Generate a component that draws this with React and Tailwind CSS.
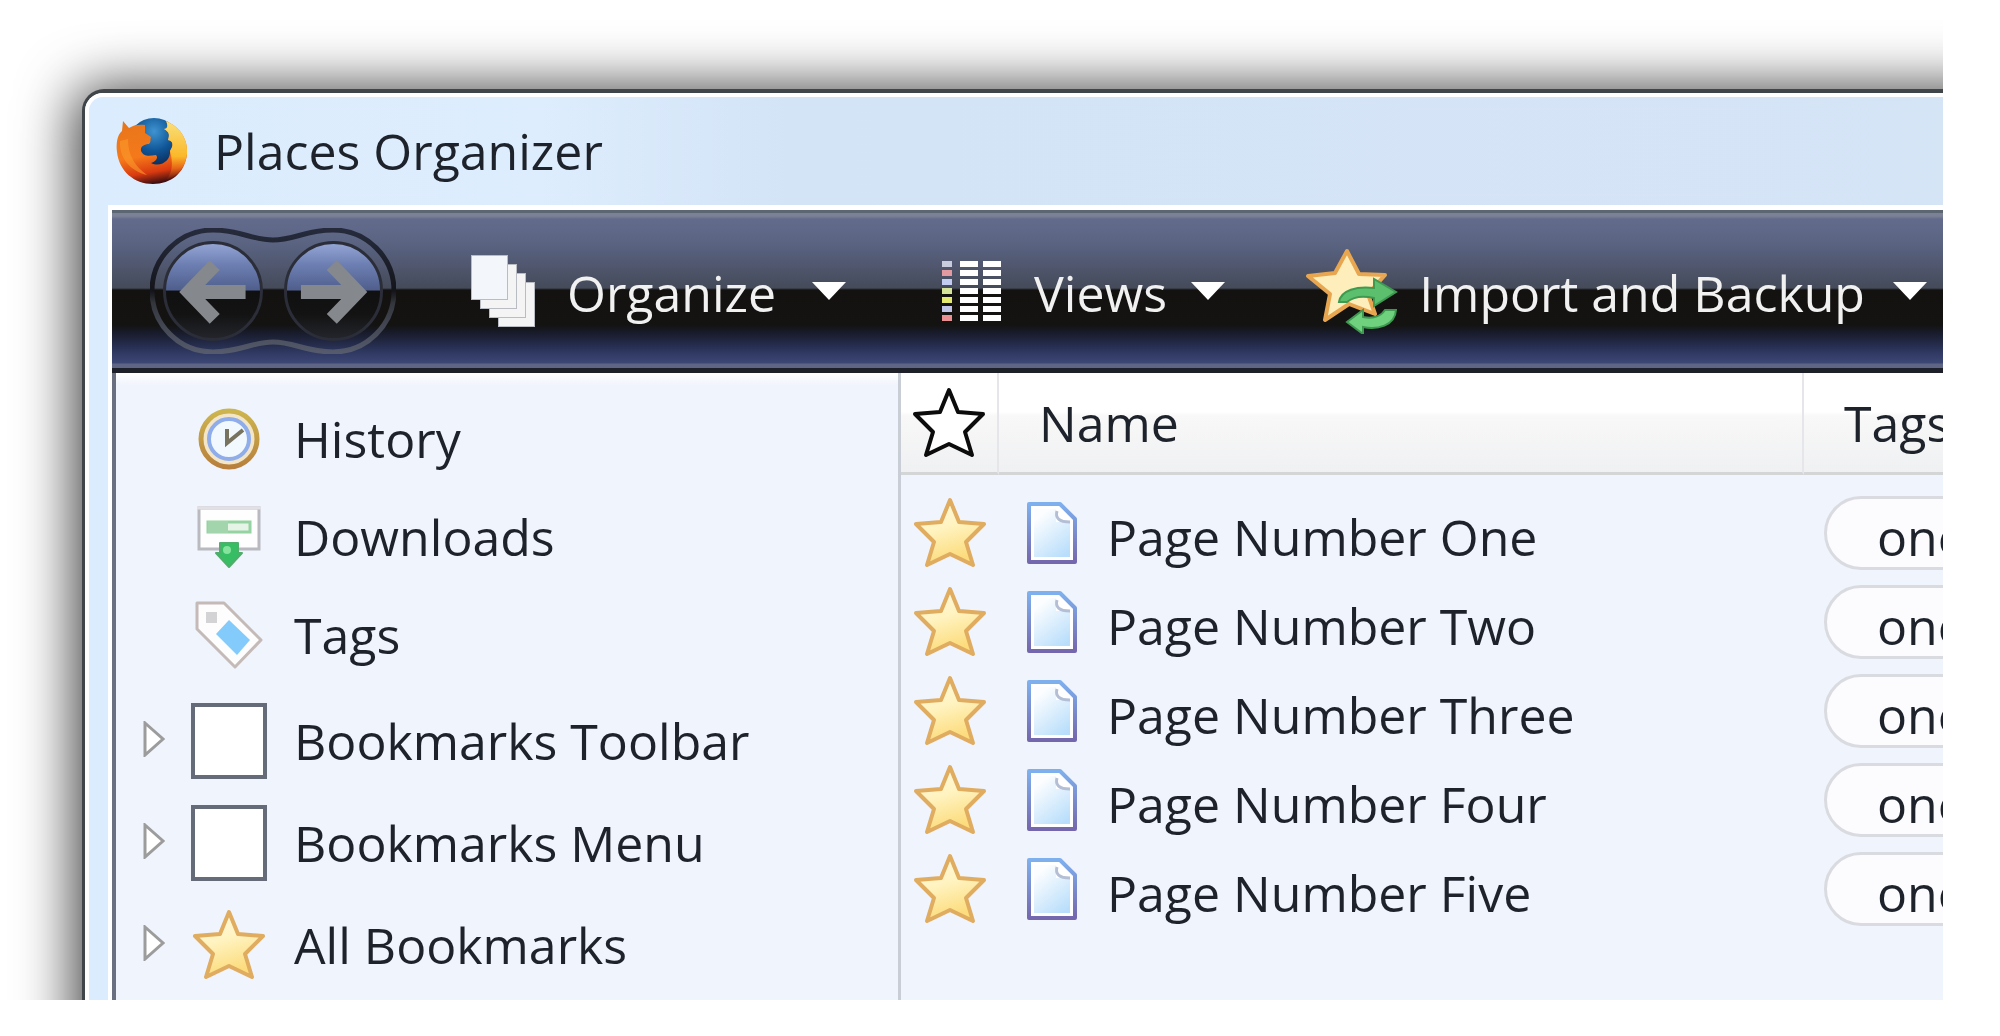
const STAR =
  "M37 3 L46 25 L71 27 L53 45 L60 68 L37 57 L14 68 L21 45 L3 27 L28 25 Z";

function Star({ outline = false }) {
  return (
    <svg viewBox="0 0 74 72" className="block h-[72px] w-[74px]" aria-hidden="true">
      <defs>
        <linearGradient id="star-fill" x1="0" y1="0" x2="0.3" y2="1">
          <stop offset="0" stopColor="#fffbe6" />
          <stop offset="0.5" stopColor="#fff3c0" />
          <stop offset="1" stopColor="#fcdc7c" />
        </linearGradient>
      </defs>
      <path
        d={STAR}
        fill={outline ? "#ffffff" : "url(#star-fill)"}
        stroke={outline ? "#0c0c0c" : "#e0ac60"}
        strokeWidth="4"
        strokeLinejoin="round"
      />
    </svg>
  );
}

function FirefoxLogo() {
  return (
    <svg viewBox="0 0 72 68" className="block h-[68px] w-[72px]" aria-hidden="true">
      <defs>
        <radialGradient id="globe" cx="0.5" cy="0.25" r="0.8">
          <stop offset="0" stopColor="#3f93d0" />
          <stop offset="0.45" stopColor="#0f5596" />
          <stop offset="1" stopColor="#0a1536" />
        </radialGradient>
        <linearGradient id="fox" x1="0.3" y1="0" x2="0.5" y2="1">
          <stop offset="0" stopColor="#e8761c" />
          <stop offset="0.55" stopColor="#f5791a" />
          <stop offset="0.82" stopColor="#d93a10" />
          <stop offset="1" stopColor="#3b0d10" />
        </linearGradient>
        <linearGradient id="tail" x1="0" y1="0" x2="0" y2="1">
          <stop offset="0" stopColor="#f9e07a" />
          <stop offset="0.6" stopColor="#fbb829" />
          <stop offset="1" stopColor="#ee6a16" stopOpacity="0" />
        </linearGradient>
      </defs>
      <circle cx="38" cy="28" r="27" fill="url(#globe)" />
      <path
        d="M7 4 L13 11 C17 8 23 7 29 8 L29 16 L35 20 C34 24 35 25 33 27 C29 27 24 29 25 34 C28 40 33 39 40 38 C43 41 39 45 35 46 C45 51 55 43 54 34 C58 28 57 24 52 23 C54 17 53 15 48 12 C52 12 52 8 50 4 C66 11 72 24 71 37 C69 56 55 67 37 67 C18 67 3 54 1 35 C0 27 1 18 6 14 Z"
        fill="url(#fox)"
      />
      <path
        d="M50 4 C66 11 72 24 71 37 C69 51 62 59 50 63 C57 55 57 46 54 34 C58 28 57 24 52 23 C54 17 53 15 48 12 C52 12 52 8 50 4 Z"
        fill="url(#tail)"
      />
      <path d="M4 24 C3 42 15 54 31 58 C19 49 12 39 12 22 Z" fill="#fb9a2c" opacity="0.6" />
    </svg>
  );
}

function NavButton({ label, flip = false }) {
  return (
    <button
      type="button"
      aria-label={label}
      className="size-[100px] rounded-full border-3 border-[#2b2e38] bg-[linear-gradient(#93a4d4_0%,#6d7fb2_22%,#4f5e8c_49%,#101010_50%,#131313_75%,#23252b_100%)]"
    >
      <svg
        viewBox="0 0 94 94"
        className={flip ? "block size-full -scale-x-100" : "block size-full"}
        aria-hidden="true"
      >
        <path
          d="M49 21 L23 48 L49 75 M27 48 H80"
          fill="none"
          stroke="#85888c"
          strokeWidth="14"
        />
      </svg>
    </button>
  );
}

function NavButtons() {
  return (
    <div className="relative flex h-[126px] w-[246px] shrink-0 items-center gap-[21px] px-[13px]">
      <svg
        viewBox="0 0 246 126"
        className="absolute inset-0 -z-10 size-full"
        fill="none"
        aria-hidden="true"
      >
        <defs>
          <linearGradient id="ring" x1="0" y1="0" x2="0" y2="1">
            <stop offset="0" stopColor="#262b3c" />
            <stop offset="0.5" stopColor="#14151b" />
            <stop offset="0.6" stopColor="#33363c" />
            <stop offset="1" stopColor="#555a6c" />
          </linearGradient>
        </defs>
        <path
          d="M63 2 C90 2 102 12 123 12 C144 12 156 2 183 2 A61 61 0 0 1 183 124 C156 124 144 114 123 114 C102 114 90 124 63 124 A61 61 0 0 1 63 2 Z"
          stroke="url(#ring)"
          strokeWidth="5"
        />
      </svg>
      <NavButton label="Back" />
      <NavButton label="Forward" flip />
    </div>
  );
}

function PagesIcon() {
  return (
    <svg viewBox="0 0 64 72" className="block h-[72px] w-16" aria-hidden="true">
      {[27, 18, 9, 0].map((o) => (
        <rect
          key={o}
          x={o + 0.5}
          y={o + 0.5}
          width="36"
          height="44"
          fill={o === 0 ? "#f3f7fc" : "#f4f4f4"}
          stroke="#b9bcc2"
        />
      ))}
    </svg>
  );
}

function ViewsIcon() {
  const dots = ["#c9ccdd", "#e39aa0", "#c3cdf4", "#d5e39a", "#e3e96e", "#c0c4e6", "#ea8f92"];
  return (
    <svg viewBox="0 0 60 60" className="block size-[60px]" aria-hidden="true">
      {dots.map((c, i) => (
        <g key={c}>
          <rect x="0" y={i * 9} width="10" height="6" fill={c} />
          <rect x="18" y={i * 9} width="18" height="6" fill="#ffffff" />
          <rect x="41" y={i * 9} width="18" height="6" fill="#ffffff" />
        </g>
      ))}
    </svg>
  );
}

function ImportIcon() {
  return (
    <svg viewBox="0 0 94 86" className="block h-[86px] w-[94px]" aria-hidden="true">
      <path
        d="M42 3 L54 26 L80 27 L63 46 L70 66 L44 56 L20 72 L25 46 L3 28 L30 25 Z"
        fill="#fdeebb"
        stroke="#e9a650"
        strokeWidth="4"
        strokeLinejoin="round"
      />
      <path
        d="M34 54 C36 42 52 38 69 40 V31 L91 44 L69 58 V50 C56 47 48 49 42 54 Z"
        fill="#5cbf6d"
        stroke="#3d9a50"
        strokeWidth="2"
      />
      <path
        d="M91 62 C90 78 72 82 58 79 V86 L42 74 L58 62 V69 C68 71 76 68 80 62 Z"
        fill="#6fd07d"
        stroke="#3d9a50"
        strokeWidth="2"
      />
    </svg>
  );
}

function ToolbarMenu({ label, icon, iconGap, caretGap }) {
  return (
    <button type="button" className="flex shrink-0 items-center whitespace-nowrap text-[#f1f1f1]">
      {icon}
      <span className={`${iconGap} pt-1`}>{label}</span>
      <svg viewBox="0 0 34 18" className={`${caretGap} h-[18px] w-[34px]`} aria-hidden="true">
        <path d="M0 0 H34 L17 18 Z" fill="#ffffff" />
      </svg>
    </button>
  );
}

function ClockIcon() {
  return (
    <svg viewBox="0 0 64 64" className="size-16" aria-hidden="true">
      <defs>
        <linearGradient id="brass" x1="0" y1="0" x2="0" y2="1">
          <stop offset="0" stopColor="#cdb54e" />
          <stop offset="1" stopColor="#b8803c" />
        </linearGradient>
      </defs>
      <circle cx="32" cy="32" r="28" fill="#f3e6c8" stroke="url(#brass)" strokeWidth="5" />
      <circle cx="32" cy="32" r="20" fill="#f1f9ff" stroke="#8fadea" strokeWidth="4" />
      <path d="M30 22 V36 L46 23" fill="none" stroke="#77735f" strokeWidth="4" />
    </svg>
  );
}

function DownloadIcon() {
  return (
    <svg viewBox="0 0 64 64" className="size-16" aria-hidden="true">
      <rect x="2" y="3" width="60" height="41" fill="#fdfefd" stroke="#b9b9bf" strokeWidth="3" />
      <path d="M0 3 H64" stroke="#e2e0e4" strokeWidth="3" />
      <rect x="11" y="17" width="42" height="10" fill="#e6f4e8" stroke="#96d3a2" strokeWidth="3" />
      <rect x="11" y="16" width="20" height="12" fill="#a3d5ad" />
      <path
        d="M23 38 H41 V48 H45 L32 62 L19 48 H23 Z"
        fill="#37bd63"
        stroke="#4fae6b"
        strokeWidth="2"
        strokeLinejoin="round"
      />
      <circle cx="30" cy="45" r="4" fill="#84e39c" />
    </svg>
  );
}

function TagIcon() {
  return (
    <svg viewBox="0 0 70 70" className="size-[70px]" aria-hidden="true">
      <path
        d="M3 3 H30 L67 40 L41 67 L3 29 Z"
        fill="#fdfdfd"
        stroke="#c4bab8"
        strokeWidth="3"
        strokeLinejoin="round"
      />
      <rect x="12" y="12" width="11" height="11" fill="#d3d3d6" />
      <path d="M35 20 L56 40 L43 55 L22 34 Z" fill="#83cbfb" />
    </svg>
  );
}

function PageIcon() {
  return (
    <svg viewBox="0 0 50 62" className="block h-[62px] w-[50px] shrink-0" aria-hidden="true">
      <defs>
        <linearGradient id="page-fill" x1="0.2" y1="0" x2="0.8" y2="1">
          <stop offset="0.1" stopColor="#fbfdff" />
          <stop offset="1" stopColor="#b9defb" />
        </linearGradient>
        <linearGradient id="page-edge" x1="0" y1="0" x2="0" y2="1">
          <stop offset="0" stopColor="#7fb0ee" />
          <stop offset="1" stopColor="#7467ad" />
        </linearGradient>
      </defs>
      <path
        d="M2 2 H33 L48 17 V60 H2 Z"
        fill="#ffffff"
        stroke="url(#page-edge)"
        strokeWidth="4"
        strokeLinejoin="round"
      />
      <path d="M7 7 H29 V20 H43 V55 H7 Z" fill="url(#page-fill)" />
      <path d="M30 9 C28 16 32 20 43 20" fill="none" stroke="#b4bfd6" strokeWidth="3" />
    </svg>
  );
}

function EmptyIcon() {
  return <span className="block size-[76px] border-4 border-[#656b78] bg-white" />;
}

function SidebarItem({ icon, label, expandable = false }) {
  return (
    <li
      className={
        expandable
          ? "flex h-[102px] items-center gap-[26px]"
          : "flex h-[98px] items-center gap-[26px]"
      }
    >
      {expandable ? (
        <button type="button" aria-label={`Expand ${label}`} className="w-[22px] shrink-0 pb-1">
          <svg viewBox="0 0 22 36" className="block h-9 w-[22px]" aria-hidden="true">
            <path d="M2 2 L20 18 L2 34 Z" fill="#ffffff" stroke="#9c9c9c" strokeWidth="3" />
          </svg>
        </button>
      ) : (
        <span className="w-[22px] shrink-0" />
      )}
      <a href="#" className="flex items-center gap-[27px] whitespace-nowrap">
        <span className="flex w-[76px] shrink-0 justify-center">{icon}</span>
        {label}
      </a>
    </li>
  );
}

const pages = ["One", "Two", "Three", "Four", "Five"];

export default function App() {
  return (
    <div className="flex min-h-screen flex-col bg-white pr-[57px] pb-9 font-['Open_Sans','Noto_Sans',sans-serif] text-[50px] leading-[60px] text-[#1d222b]">
      <div className="flex flex-1 flex-col overflow-hidden pt-[89px] pl-[82px]">
        <div className="-mr-24 -mb-24 flex flex-1 flex-col rounded-tl-[22px] border-t-4 border-l-3 border-[#3f4549] bg-white shadow-[-6px_0_55px_2px_rgba(0,0,0,0.75)]">
          <div className="flex flex-1 flex-col rounded-tl-[18px] border-t-4 border-l-4 border-white bg-[linear-gradient(90deg,#dbecfe_0px,#ddedfd_450px,#d3e4f7_700px,#d5e5f6_100%)] pl-[19px]">
            <header className="flex h-[108px] items-center gap-[26px] pl-[8px]">
              <FirefoxLogo />
              <h1>Places Organizer</h1>
            </header>
            <div className="flex flex-1 flex-col border-t-5 border-l-4 border-white">
              <div
                role="toolbar"
                aria-label="Places toolbar"
                className="isolate flex h-[163px] items-center overflow-hidden border-t-3 border-b-5 border-t-[#5c6673] border-b-[#1e2029] bg-[linear-gradient(#7c8296_0px,#7c8296_3px,#636b8c_6px,#5b6583_28px,#50576f_52px,#454b59_75px,#131210_77px,#131312_112px,#1a1e31_122px,#2f3963_140px,#3d4773_150px,#5f6584_151px,#5f6584_100%)] pl-[38px]"
              >
                <NavButtons />
                <div className="flex items-center pl-[75px]">
                  <ToolbarMenu label="Organize" icon={<PagesIcon />} iconGap="ml-8" caretGap="ml-9" />
                  <div className="w-24 shrink-0" />
                  <ToolbarMenu label="Views" icon={<ViewsIcon />} iconGap="ml-8" caretGap="ml-6" />
                  <div className="w-20 shrink-0" />
                  <ToolbarMenu
                    label="Import and Backup"
                    icon={<ImportIcon />}
                    iconGap="ml-5"
                    caretGap="ml-7"
                  />
                </div>
              </div>

              <div className="flex flex-1 border-l-4 border-[#6a7080] bg-[#f0f4fd]">
                <nav
                  aria-label="Library"
                  className="w-[782px] shrink-0 bg-[linear-gradient(#ffffff_0px,#f0f4fd_12px)] pt-[17px] pl-[27px]"
                >
                  <ul>
                    <SidebarItem icon={<ClockIcon />} label="History" />
                    <SidebarItem icon={<DownloadIcon />} label="Downloads" />
                    <SidebarItem icon={<TagIcon />} label="Tags" />
                  </ul>
                  <ul className="pt-1.5">
                    <SidebarItem icon={<EmptyIcon />} label="Bookmarks Toolbar" expandable />
                    <SidebarItem icon={<EmptyIcon />} label="Bookmarks Menu" expandable />
                    <SidebarItem icon={<Star />} label="All Bookmarks" expandable />
                  </ul>
                </nav>

                <main className="min-w-0 flex-1 overflow-hidden border-l-3 border-[#c9cdd6]">
                  <table className="w-full table-fixed border-separate border-spacing-0 text-left">
                    <thead>
                      <tr className="bg-[linear-gradient(#ffffff_0%,#ffffff_38%,#f8f8f8_42%,#eff0f2_100%)]">
                        <th
                          aria-label="Starred"
                          className="h-[102px] w-[98px] border-r-2 border-b-3 border-r-[#e6e6ea] border-b-[#d3d5d6] p-0"
                        >
                          <span className="flex justify-center">
                            <Star outline />
                          </span>
                        </th>
                        <th className="w-[805px] border-r-2 border-b-3 border-r-[#e6e6ea] border-b-[#d3d5d6] p-0 pl-10 font-normal">
                          Name
                        </th>
                        <th className="border-b-3 border-[#d3d5d6] p-0 pl-10 font-normal">Tags</th>
                      </tr>
                    </thead>
                    <tbody className="before:block before:h-[13px] before:content-['']">
                      {pages.map((n) => (
                        <tr key={n} className="h-[89px]">
                          <td className="p-0">
                            <span className="flex justify-center">
                              <Star />
                            </span>
                          </td>
                          <td className="p-0 pl-7">
                            <a href="#" className="flex items-center gap-[30px] whitespace-nowrap">
                              <PageIcon />
                              <span className="pt-2">{`Page Number ${n}`}</span>
                            </a>
                          </td>
                          <td className="p-0 pl-5">
                            <span className="flex h-[74px] w-52 items-center rounded-full border-3 border-[#dadbe0] bg-[#fcfcff] pt-2 pl-[50px]">
                              one
                            </span>
                          </td>
                        </tr>
                      ))}
                    </tbody>
                  </table>
                </main>
              </div>
            </div>
          </div>
        </div>
      </div>
    </div>
  );
}
